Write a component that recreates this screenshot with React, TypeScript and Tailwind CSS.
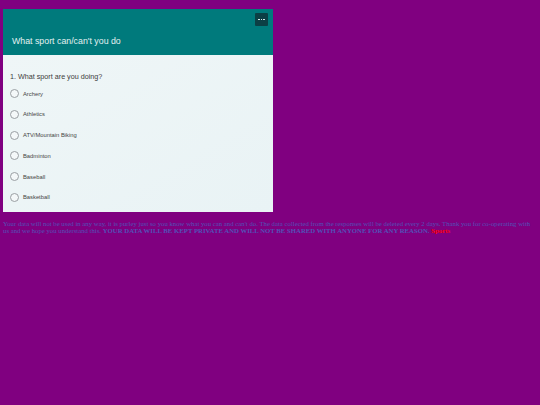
const options = ['Archery', 'Athletics', 'ATV/Mountain Biking', 'Badminton', 'Baseball', 'Basketball'];

export default function App() {
  return (
    <div className="min-h-[405px] w-[540px] bg-[#800080] px-[3px] pt-[9px] font-['Liberation_Serif',serif]">
      {/* Embedded form */}
      <div className="h-[203px] w-[270px] overflow-hidden font-['Liberation_Sans',sans-serif]">
        <div className="flex h-[46px] flex-col justify-between bg-[#007a7c] pb-[8px] pl-[9px] pr-[5px] pt-[4px]">
          <button type="button" className="flex h-[13px] w-[13px] items-center justify-center self-end rounded-[1px] bg-[#0c3f45]">
            <span className="flex gap-[1px]">
              <span className="h-[1.5px] w-[1.5px] bg-[#d8e6e6]"></span>
              <span className="h-[1.5px] w-[1.5px] bg-[#d8e6e6]"></span>
              <span className="h-[1.5px] w-[1.5px] bg-[#d8e6e6]"></span>
            </span>
          </button>
          <h1 className="text-[8.8px] leading-[11px] text-[#e3f1f1]">What sport can/can't you do</h1>
        </div>
        <div className="h-[157px] bg-gradient-to-br from-[#eff6f7] to-[#e9f3f5] pl-[7px] pt-[17px]">
          <p className="text-[7.2px] leading-[10px] text-[#3c3c3c]">1. What sport are you doing?</p>
          <ul className="mt-[4.5px] flex flex-col gap-[6.75px]">
            {options.map((option) => (
              <li key={option} className="flex h-[14px] items-center gap-[4px]">
                <span className="box-content h-[7px] w-[7px] rounded-full border border-[#9a9fa3] bg-[#f4f8f9]"></span>
                <span className="text-[5.8px] leading-[8px] text-[#444]">{option}</span>
              </li>
            ))}
          </ul>
        </div>
      </div>
      {/* Notice under the form */}
      <p className="mt-[7.5px] w-[534px] text-[6.75px] leading-[7.5px] text-[#5252b8]">
        Your data will not be used in any way, it is purley just so you know what you can and can't do. The data collected from the responses will be deleted every 2 days. Thank you for co-operating with us and we hope you understand this. <b>YOUR DATA WILL BE KEPT PRIVATE AND WILL NOT BE SHARED WITH ANYONE FOR ANY REASON.</b> <b className="text-[#f00]">Sports</b>
      </p>
    </div>
  );
}
